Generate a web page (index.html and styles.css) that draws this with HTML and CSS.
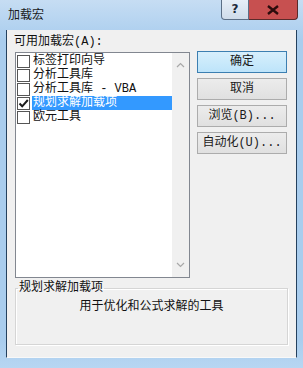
FILE: index.html
```html
<!DOCTYPE html>
<html lang="zh-CN">
<head>
    <meta charset="UTF-8">
    <title>加载宏</title>
    <link rel="stylesheet" href="styles.css">
</head>
<body>
    <div class="window">
        <div class="title-bar">
            <span class="title">加载宏</span>
            <div class="caption-buttons">
                <div class="help-button">?</div>
                <div class="close-button">
                    <svg width="12" height="10" viewBox="0 0 12 10">
                        <path d="M1 1 L11 9 M11 1 L1 9" stroke="#2a0c0c" stroke-width="2.4"/>
                    </svg>
                </div>
            </div>
        </div>

        <div class="client">
            <div class="top">
                <div class="left">
                    <div class="list-label">可用加载宏(A):</div>
                    <div class="list-box">
                        <div class="items">
                            <div class="item"><span class="check"></span><span class="text">标签打印向导</span></div>
                            <div class="item"><span class="check"></span><span class="text">分析工具库</span></div>
                            <div class="item"><span class="check"></span><span class="text">分析工具库 - VBA</span></div>
                            <div class="item selected">
                                <span class="check">
                                    <svg width="11" height="11" viewBox="0 0 11 11">
                                        <path d="M1.5 5.5 L4.2 8.3 L9.8 2" fill="none" stroke="#1c1c1c" stroke-width="2"/>
                                    </svg>
                                </span>
                                <span class="text">规划求解加载项</span>
                            </div>
                            <div class="item"><span class="check"></span><span class="text">欧元工具</span></div>
                        </div>
                        <div class="scrollbar">
                            <svg width="9" height="6" viewBox="0 0 9 6"><path d="M1 5 L4.5 1.5 L8 5" fill="none" stroke="#a8a8a8" stroke-width="1.2"/></svg>
                            <svg width="9" height="6" viewBox="0 0 9 6"><path d="M1 1 L4.5 4.5 L8 1" fill="none" stroke="#a8a8a8" stroke-width="1.2"/></svg>
                        </div>
                    </div>
                </div>

                <div class="buttons">
                    <button class="btn default">确定</button>
                    <button class="btn">取消</button>
                    <button class="btn">浏览(B)...</button>
                    <button class="btn">自动化(U)...</button>
                </div>
            </div>

            <fieldset class="details">
                <legend>规划求解加载项</legend>
                <div class="description">用于优化和公式求解的工具</div>
            </fieldset>
        </div>
    </div>
</body>
</html>
```

FILE: styles.css
```css
body {
    margin: 0;
    font-family: "Liberation Mono", "Noto Sans CJK SC", monospace;
    font-size: 12px;
    color: #111;
}

.window {
    width: 303px;
    height: 368px;
    box-sizing: border-box;
    padding: 0 6px 10px 6px;
    background: linear-gradient(to bottom, #c6ddf3, #a9cdee 40px, #a9cdee 340px, #b7d6f2);
    display: flex;
    flex-direction: column;
}

.title-bar {
    height: 30px;
    display: flex;
    justify-content: space-between;
    align-items: flex-start;
}

.title {
    margin-top: 8px;
    margin-left: 2px;
    line-height: 16px;
    font-size: 12px;
    color: #1a1a1a;
}

.caption-buttons {
    display: flex;
    margin-right: -1px;
}

.help-button {
    width: 28px;
    height: 20px;
    box-sizing: border-box;
    border: 1px solid #5b6f86;
    border-top: none;
    border-radius: 0 0 0 4px;
    background: linear-gradient(to bottom, #e6eef7, #cfdcea);
    text-align: center;
    font-family: "DejaVu Sans", sans-serif;
    font-weight: bold;
    font-size: 12px;
    line-height: 19px;
    color: #1d2a3a;
}

.close-button {
    width: 49px;
    height: 20px;
    box-sizing: border-box;
    border: 1px solid #5a2a2a;
    border-left: none;
    border-top: none;
    border-radius: 0 0 4px 0;
    background: #c75050;
    display: flex;
    justify-content: center;
    align-items: center;
}

.client {
    flex: 1;
    background: #f0f0f0;
    border: 1px solid #24415e;
    border-top: none;
    border-bottom: 1px solid #f8f8f8;
    padding: 5px 8px 0 8px;
}

.top {
    display: flex;
    gap: 7px;
}

.left {
    width: 175px;
}

.list-label {
    height: 14px;
    line-height: 14px;
    margin-bottom: 3px;
    margin-left: -1px;
}

.list-box {
    height: 226px;
    box-sizing: border-box;
    border: 1px solid #828790;
    background: #fff;
    display: flex;
}

.items {
    flex: 1;
    padding-top: 1px;
}

.item {
    height: 14px;
    display: flex;
    align-items: center;
    line-height: 14px;
}

.check {
    width: 11px;
    height: 11px;
    margin-left: 1px;
    margin-right: 2px;
    border: 1px solid #555;
    background: #fff;
    display: flex;
    align-items: center;
    justify-content: center;
}

.text {
    padding: 0 2px 0 1px;
    flex: 1;
}

.item.selected .text {
    background: #3399ff;
    color: #fff;
}

.scrollbar {
    width: 17px;
    background: #f0f0f0;
    display: flex;
    flex-direction: column;
    justify-content: space-between;
    align-items: center;
    padding: 9px 0 9px 0;
}

.buttons {
    width: 90px;
    padding-top: 16px;
    display: flex;
    flex-direction: column;
    gap: 5px;
}

.btn {
    height: 22px;
    box-sizing: border-box;
    border: 1px solid #acacac;
    background: linear-gradient(to bottom, #ececec, #e0e0e0);
    font-family: "Liberation Mono", "Noto Sans CJK SC", monospace;
    font-size: 12px;
    line-height: 18px;
    color: #1a1a1a;
    padding: 0;
}

.btn.default {
    border-color: #3c7fb1;
    background: linear-gradient(to bottom, #d7effc, #bde4fa);
}

.details {
    margin: 3px 0 0 0;
    padding: 0;
    height: 64px;
    box-sizing: border-box;
    border: 1px solid #d5d5d5;
    box-shadow: inset 1px 1px 0 #fff, 1px 1px 0 #fff;
}

.details legend {
    padding: 0 1px;
    margin-left: 2px;
    line-height: 14px;
}

.description {
    text-align: center;
    line-height: 14px;
    margin-top: 5px;
}
```
